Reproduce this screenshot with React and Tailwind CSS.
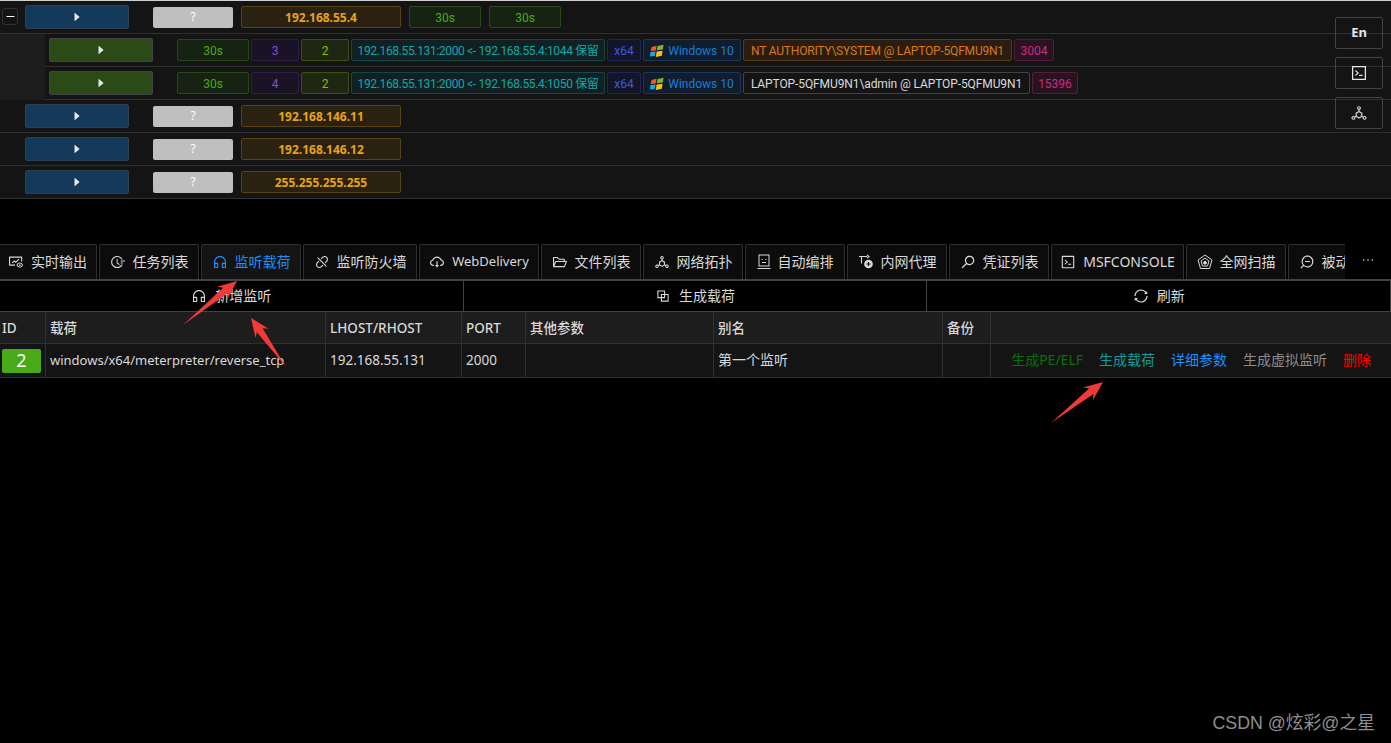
import {
  AiFillCaretRight,
  AiOutlineBlock,
  AiOutlineCloudDownload,
  AiOutlineCode,
  AiOutlineCustomerService,
  AiOutlineDeploymentUnit,
  AiOutlineDisconnect,
  AiOutlineEllipsis,
  AiOutlineFieldTime,
  AiOutlineFolderOpen,
  AiOutlineFundView,
  AiOutlineMinus,
  AiOutlineSearch,
  AiOutlineSync,
  AiOutlineZoomOut,
} from "react-icons/ai";

const tagStyles = {
  gold: "bg-[#2b2111] border-[#594214] text-[#e8a317] font-bold",
  green: "bg-[#162312] border-[#274916] text-[#49aa19] font-['Roboto','Noto_Sans_CJK_SC',sans-serif]",
  purple: "bg-[#1a1325] border-[#301c4d] text-[#854eca] font-['Roboto','Noto_Sans_CJK_SC',sans-serif]",
  lime: "bg-[#1f2611] border-[#3e4f13] text-[#8bbb11] font-['Roboto','Noto_Sans_CJK_SC',sans-serif]",
  cyan: "bg-[#112123] border-[#144848] text-[#13a8a8] font-['Roboto','Noto_Sans_CJK_SC',sans-serif] tracking-[-0.35px]",
  geekblue: "bg-[#131629] border-[#1c2755] text-[#3c5ae0] font-['Roboto','Noto_Sans_CJK_SC',sans-serif]",
  blue: "bg-[#111d2c] border-[#15395b] text-[#177ddc] font-['Roboto','Noto_Sans_CJK_SC',sans-serif]",
  orange: "bg-[#2b1d11] border-[#593815] text-[#d87a16] font-['Roboto','Noto_Sans_CJK_SC',sans-serif] tracking-[-0.2px]",
  magenta: "bg-[#291321] border-[#551c3b] text-[#cb2b83] font-['Roboto','Noto_Sans_CJK_SC',sans-serif]",
  gray: "bg-[#141414] border-[#434343] text-[#dbdbdb] font-['Roboto','Noto_Sans_CJK_SC',sans-serif] tracking-[-0.1px]",
};

const Tag = ({ color, className = "", children }) => (
  <div
    className={`flex items-center justify-center shrink-0 h-[22px] pt-px border rounded-[2px] text-xs whitespace-nowrap ${tagStyles[color]} ${className}`}
  >
    {children}
  </div>
);

const PlayButton = ({ green }) => (
  <div
    className={`flex items-center justify-center shrink-0 w-[104px] h-[24px] border rounded-[2px] text-[#e8e8e8] text-xs ${
      green ? "bg-[#2a4a17] border-[#434343]" : "bg-[#15395b] border-[#2b3f55]"
    }`}
  >
    <AiFillCaretRight />
  </div>
);

const HostRow = ({ ip, expanded }) => (
  <div className="flex items-center h-[33px] pl-[25px] border-b border-[#303030] relative">
    {expanded && (
      <div className="absolute left-[2px] top-[7px] w-[16px] h-[17px] flex items-center justify-center bg-[#141414] border border-[#303030] rounded-[3px] text-white text-[11px]">
        <AiOutlineMinus />
      </div>
    )}
    <PlayButton />
    <div className="flex items-center justify-center ml-[24px] w-[80px] h-[21px] bg-[#bfbfbf] rounded-[2px] text-white text-xs">
      ?
    </div>
    <Tag color="gold" className="ml-[8px] w-[160px]">
      {ip}
    </Tag>
    {expanded && (
      <>
        <Tag color="green" className="ml-[8px] w-[72px]">
          30s
        </Tag>
        <Tag color="green" className="ml-[8px] w-[72px]">
          30s
        </Tag>
      </>
    )}
  </div>
);

const WindowsLogo = () => (
  <svg width="14" height="14" viewBox="0 0 14 14" className="mr-[4px]">
    <path d="M1.600 3 6.600 1.800 5.800 6.400 0.600 7Z" fill="#f25a24" />
    <path d="M7.600 2 13.600 0.800 12.800 5.600 6.800 6.300Z" fill="#7cb82f" />
    <path d="M0.500 8 5.600 7.400 4.800 12 0 12.600Z" fill="#19a7e8" />
    <path d="M6.600 7.400 12.600 6.700 11.800 11.800 5.800 13Z" fill="#fdbb13" />
  </svg>
);

const SessionRow = ({ job, link, user, userColor, userWidth, pid, pidWidth }) => (
  <div className="flex items-center h-[33px] ml-[45px] pl-[4px] border-b border-[#303030] gap-[2px] bg-[#141414]">
    <PlayButton green />
    <Tag color="green" className="ml-[22px] w-[72px]">
      30s
    </Tag>
    <Tag color="purple" className="w-[48px]">
      {job}
    </Tag>
    <Tag color="lime" className="w-[48px]">
      2
    </Tag>
    <Tag color="cyan" className="w-[254px]">
      {link}
    </Tag>
    <Tag color="geekblue" className="w-[34px]">
      x64
    </Tag>
    <Tag color="blue" className="w-[98px]">
      <WindowsLogo />
      Windows 10
    </Tag>
    <Tag color={userColor} className={userWidth}>
      {user}
    </Tag>
    <Tag color="magenta" className={pidWidth}>
      {pid}
    </Tag>
  </div>
);

const RobotFace = () => (
  <svg width="14" height="16" viewBox="0 0 14 16" fill="none" stroke="currentColor" strokeWidth="1">
    <rect x="2" y="1" width="10" height="11" />
    <path d="M0.500 14.500h13M5 8.500h4" />
    <path d="M5 5v1M9 5v1" />
  </svg>
);

const ProxyIcon = () => (
  <svg width="16" height="16" viewBox="0 0 16 16" fill="none" stroke="currentColor" strokeWidth="1.1">
    <path d="M1 2.500h8M3.500 2.500v7" />
    <path d="M9 1l2 1.500L9 4" />
    <circle cx="10.500" cy="10" r="4.300" fill="currentColor" stroke="none" />
    <path d="M8.500 10h4M10.500 8v4" stroke="#0c0c0c" />
  </svg>
);

const ScanIcon = () => (
  <svg width="16" height="16" viewBox="0 0 16 16" fill="none" stroke="currentColor" strokeWidth="1">
    <path d="M8 1 15 6 12.500 14.500H3.500L1 6Z" />
    <path d="M8 4 12 7 10.500 12H5.500L4 7Z" />
    <path d="M8 7 9.500 8.200 9 10H7L6.500 8.200Z" fill="currentColor" />
  </svg>
);

const tabs = [
  { label: "实时输出", icon: <AiOutlineFundView />, w: "w-[99px]" },
  { label: "任务列表", icon: <AiOutlineFieldTime />, w: "w-[100px]" },
  { label: "监听载荷", icon: <AiOutlineCustomerService />, w: "w-[100px]", active: true },
  { label: "监听防火墙", icon: <AiOutlineDisconnect />, w: "w-[114px]" },
  { label: "WebDelivery", icon: <AiOutlineCloudDownload />, w: "w-[120px] text-[13px]" },
  { label: "文件列表", icon: <AiOutlineFolderOpen />, w: "w-[100px]" },
  { label: "网络拓扑", icon: <AiOutlineDeploymentUnit />, w: "w-[100px]" },
  { label: "自动编排", icon: <RobotFace />, w: "w-[100px]" },
  { label: "内网代理", icon: <ProxyIcon />, w: "w-[100px]" },
  { label: "凭证列表", icon: <AiOutlineSearch className="-scale-x-100" />, w: "w-[100px]" },
  { label: "MSFCONSOLE", icon: <AiOutlineCode />, w: "w-[133px]" },
  { label: "全网扫描", icon: <ScanIcon />, w: "w-[100px]" },
  { label: "被动扫描", icon: <AiOutlineZoomOut className="-scale-x-100" />, w: "w-[100px]" },
];

const Tab = ({ label, icon, w, active }) => (
  <div
    className={`flex items-center justify-center shrink-0 gap-[7px] h-[35px] border border-b-0 border-[#303030] rounded-t-[2px] ${
      w.includes("text-") ? "" : "text-sm"
    } ${w} ${active ? "bg-[#141414] text-[#1890ff]" : "bg-[#0c0c0c] text-[#d9d9d9]"}`}
  >
    <span className="text-[16px]">{icon}</span>
    <span className="whitespace-nowrap">{label}</span>
  </div>
);

const ActionButton = ({ icon, label }) => (
  <div className="flex flex-1 items-center justify-center gap-[8px] border border-[#434343] -ml-px text-sm text-[#d9d9d9]">
    <span className="text-[16px]">{icon}</span>
    {label}
  </div>
);

const columns = "grid grid-cols-[46px_280px_136px_64px_188px_229px_48px_1fr]";
const headers = ["ID", "载荷", "LHOST/RHOST", "PORT", "其他参数", "别名", "备份", ""];

const arrows = [
  [183, 325, 237, 281],
  [286, 367, 251, 318],
  [1051, 423, 1103, 382],
];

// 红色标注箭头
const arrowPoints = ([x1, y1, x2, y2]) => {
  const len = Math.hypot(x2 - x1, y2 - y1);
  const dx = (x2 - x1) / len;
  const dy = (y2 - y1) / len;
  const at = (back, side) =>
    `${x2 - dx * back - dy * side},${y2 - dy * back + dx * side}`;
  return [
    `${x1},${y1}`,
    at(15, 3.5),
    at(19, 8),
    `${x2},${y2}`,
    at(19, -8),
    at(15, -3.5),
  ].join(" ");
};

export default function App() {
  return (
    <div
      className="relative h-screen w-full overflow-hidden bg-black text-[#d9d9d9]"
      style={{ fontFamily: '"Noto Sans", "Noto Sans CJK SC", sans-serif' }}
    >
      <div className="bg-[#141414] border-t border-[#d0d0d0]">
        <HostRow ip="192.168.55.4" expanded />
        <div className="bg-[#1d1d1d]">
          <SessionRow
            job="3"
            link="192.168.55.131:2000 <- 192.168.55.4:1044 保留"
            user="NT AUTHORITY\SYSTEM @ LAPTOP-5QFMU9N1"
            userColor="orange"
            userWidth="w-[269px]"
            pid="3004"
            pidWidth="w-[40px]"
          />
          <SessionRow
            job="4"
            link="192.168.55.131:2000 <- 192.168.55.4:1050 保留"
            user="LAPTOP-5QFMU9N1\admin @ LAPTOP-5QFMU9N1"
            userColor="gray"
            userWidth="w-[287px]"
            pid="15396"
            pidWidth="w-[46px]"
          />
        </div>
        <HostRow ip="192.168.146.11" />
        <HostRow ip="192.168.146.12" />
        <HostRow ip="255.255.255.255" />
      </div>

      <div className="mt-[45px] flex h-[36px] border-b border-[#434343]">
        <div className="flex w-[1347px] gap-[2px] overflow-hidden -ml-[2px]">
          {tabs.map((tab) => (
            <Tab key={tab.label} {...tab} />
          ))}
        </div>
        <div className="flex flex-1 items-center justify-center pb-[3px] text-[#a6a6a6] text-[16px]">
          <AiOutlineEllipsis />
        </div>
      </div>

      <div className="flex h-[32px]">
        <ActionButton icon={<AiOutlineCustomerService />} label="新增监听" />
        <ActionButton icon={<AiOutlineBlock />} label="生成载荷" />
        <ActionButton icon={<AiOutlineSync />} label="刷新" />
      </div>

      <div className="border-b border-[#303030] text-[13.5px]">
        <div className={`${columns} h-[32px] bg-[#1d1d1d] border-b border-[#303030] font-medium`}>
          {headers.map((h, i) => (
            <div
              key={i}
              className={`flex items-center pt-px border-r border-[#303030] last:border-r-0 ${i === 0 ? "pl-[2px]" : "pl-[4px]"}`}
            >
              {h}
            </div>
          ))}
        </div>
        <div className={`${columns} h-[33px] bg-[#141414]`}>
          <div className="flex items-center pl-[2px] border-r border-[#303030]">
            <div className="flex items-center justify-center w-[39px] h-[24px] bg-[#49aa19] rounded-[2px] text-white text-[18px]">
              2
            </div>
          </div>
          <div className="flex items-center pl-[4px] border-r border-[#303030] text-[13px]">
            windows/x64/meterpreter/reverse_tcp
          </div>
          <div className="flex items-center pl-[4px] border-r border-[#303030]">192.168.55.131</div>
          <div className="flex items-center pl-[4px] border-r border-[#303030]">2000</div>
          <div className="border-r border-[#303030]" />
          <div className="flex items-center pl-[4px] pb-px border-r border-[#303030] text-sm">第一个监听</div>
          <div className="border-r border-[#303030]" />
          <div className="flex items-center justify-end gap-[16px] pr-[20px] pb-px text-sm">
            <span className="text-[#0b6e0b]">生成PE/ELF</span>
            <span className="text-[#0f9d9d]">生成载荷</span>
            <span className="text-[#1890ff]">详细参数</span>
            <span className="text-[#8c8c8c]">生成虚拟监听</span>
            <span className="text-[#ff0000]">删除</span>
          </div>
        </div>
      </div>

      {/* 右上角悬浮按钮 */}
      <div className="absolute left-[1335px] top-[17px] flex flex-col gap-[8px]">
        <div className="flex items-center justify-center w-[48px] h-[32px] border border-[#434343] rounded-[2px] text-[13px] font-bold text-[#e8e8e8]">
          En
        </div>
        <div className="flex items-center justify-center w-[48px] h-[32px] border border-[#434343] rounded-[2px] text-[18px] text-[#e8e8e8]">
          <AiOutlineCode />
        </div>
        <div className="flex items-center justify-center w-[48px] h-[32px] border border-[#434343] rounded-[2px] text-[18px] text-[#d0d0d0]">
          <AiOutlineDeploymentUnit />
        </div>
      </div>

      <svg className="absolute inset-0 pointer-events-none" width="1391" height="743">
        {arrows.map((a, i) => (
          <polygon key={i} points={arrowPoints(a)} fill="#f03a3a" />
        ))}
      </svg>

      <div className="absolute right-[16px] bottom-[6px] text-[17.8px] text-[#8f8f8f] font-['Liberation_Sans','Noto_Sans_CJK_SC',sans-serif]">
        CSDN @炫彩@之星
      </div>
    </div>
  );
}
